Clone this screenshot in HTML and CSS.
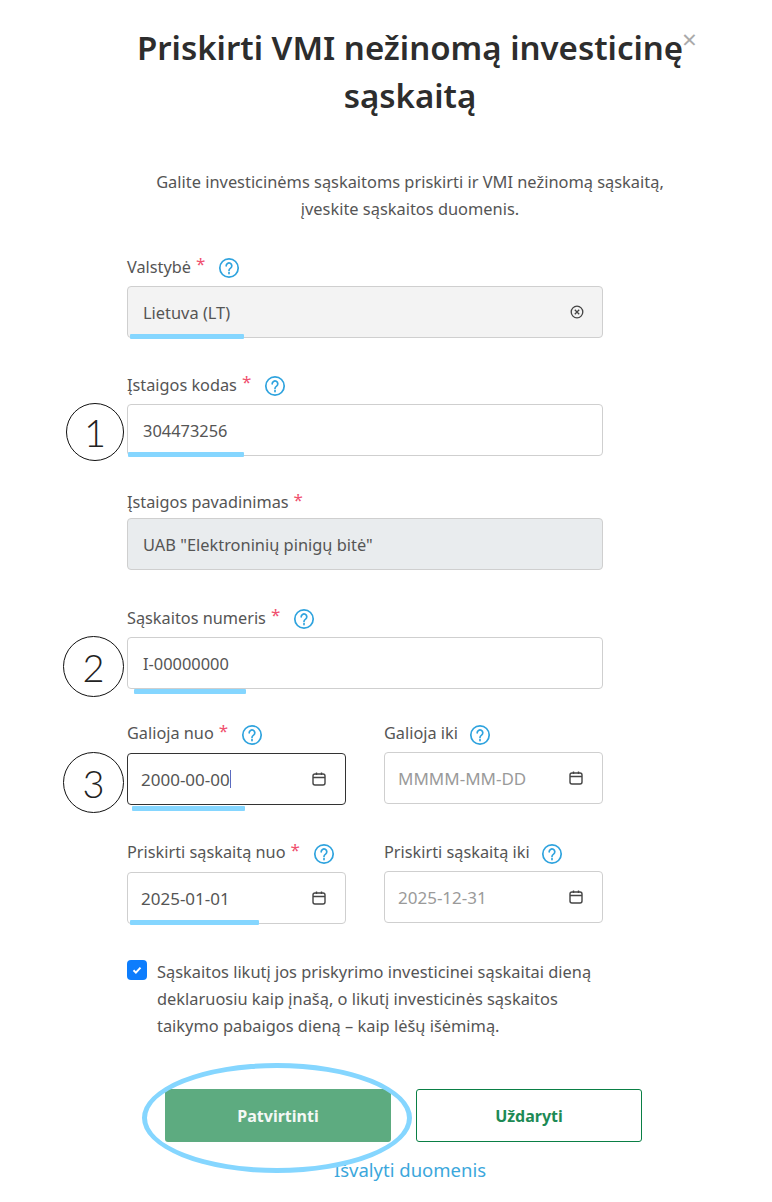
FILE: index.html
```html
<!DOCTYPE html>
<html lang="lt">
<head>
    <meta charset="UTF-8">
    <meta name="viewport" content="width=device-width, initial-scale=1.0">
    <title>Priskirti VMI nežinomą investicinę sąskaitą</title>
    <link rel="stylesheet" href="styles.css">
</head>
<body>
    <div class="modal">
        <span class="close-button">&times;</span>
        <h1 class="modal-title">Priskirti VMI nežinomą investicinę sąskaitą</h1>
        <p class="modal-intro">Galite investicinėms sąskaitoms priskirti ir VMI nežinomą sąskaitą,<br>įveskite sąskaitos duomenis.</p>

        <form class="form">
            <div class="field">
                <div class="field-label">Valstybė <span class="required">*</span>
                    <svg class="help-icon" viewBox="0 0 22 22"><circle cx="11" cy="11" r="9.2"/><path d="M8.2 8.8a2.8 2.8 0 1 1 4.4 2.3c-1 .7-1.6 1.2-1.6 2.3"/><path d="M11 15.6v1"/></svg>
                </div>
                <div class="input-box input-grey">
                    <span>Lietuva (LT)</span>
                    <svg class="clear-icon" viewBox="0 0 14 14"><circle cx="7" cy="7" r="5.8"/><path d="M4.8 4.8l4.4 4.4M9.2 4.8l-4.4 4.4"/></svg>
                    <i class="mark mark-country"></i>
                </div>
            </div>

            <div class="field">
                <div class="field-label">Įstaigos kodas <span class="required">*</span>
                    <svg class="help-icon" viewBox="0 0 22 22"><circle cx="11" cy="11" r="9.2"/><path d="M8.2 8.8a2.8 2.8 0 1 1 4.4 2.3c-1 .7-1.6 1.2-1.6 2.3"/><path d="M11 15.6v1"/></svg>
                </div>
                <div class="input-box">
                    <span>304473256</span>
                    <span class="step-circle step-one">1</span>
                    <i class="mark mark-code"></i>
                </div>
            </div>

            <div class="field field-plain">
                <div class="field-label">Įstaigos pavadinimas <span class="required">*</span></div>
                <div class="input-box input-disabled">
                    <span>UAB "Elektroninių pinigų bitė"</span>
                </div>
            </div>

            <div class="field field-short">
                <div class="field-label">Sąskaitos numeris <span class="required">*</span>
                    <svg class="help-icon" viewBox="0 0 22 22"><circle cx="11" cy="11" r="9.2"/><path d="M8.2 8.8a2.8 2.8 0 1 1 4.4 2.3c-1 .7-1.6 1.2-1.6 2.3"/><path d="M11 15.6v1"/></svg>
                </div>
                <div class="input-box">
                    <span>I-00000000</span>
                    <span class="step-circle step-two">2</span>
                    <i class="mark mark-number"></i>
                </div>
            </div>

            <div class="field-row">
                <div class="field">
                    <div class="field-label">Galioja nuo <span class="required">*</span>
                        <svg class="help-icon" viewBox="0 0 22 22"><circle cx="11" cy="11" r="9.2"/><path d="M8.2 8.8a2.8 2.8 0 1 1 4.4 2.3c-1 .7-1.6 1.2-1.6 2.3"/><path d="M11 15.6v1"/></svg>
                    </div>
                    <div class="input-box input-focus">
                        <span class="date-value">2000-00-00</span><i class="caret"></i>
                        <svg class="date-icon" viewBox="0 0 16 16"><rect x="2" y="3" width="12" height="11" rx="2"/><path d="M2 6.5h12M5.5 1.5v2.5M10.5 1.5v2.5"/></svg>
                        <span class="step-circle step-three">3</span>
                        <i class="mark mark-from"></i>
                    </div>
                </div>
                <div class="field">
                    <div class="field-label">Galioja iki
                        <svg class="help-icon" viewBox="0 0 22 22"><circle cx="11" cy="11" r="9.2"/><path d="M8.2 8.8a2.8 2.8 0 1 1 4.4 2.3c-1 .7-1.6 1.2-1.6 2.3"/><path d="M11 15.6v1"/></svg>
                    </div>
                    <div class="input-box">
                        <span class="placeholder">MMMM-MM-DD</span>
                        <svg class="date-icon" viewBox="0 0 16 16"><rect x="2" y="3" width="12" height="11" rx="2"/><path d="M2 6.5h12M5.5 1.5v2.5M10.5 1.5v2.5"/></svg>
                    </div>
                </div>
            </div>

            <div class="field-row">
                <div class="field">
                    <div class="field-label">Priskirti sąskaitą nuo <span class="required">*</span>
                        <svg class="help-icon" viewBox="0 0 22 22"><circle cx="11" cy="11" r="9.2"/><path d="M8.2 8.8a2.8 2.8 0 1 1 4.4 2.3c-1 .7-1.6 1.2-1.6 2.3"/><path d="M11 15.6v1"/></svg>
                    </div>
                    <div class="input-box">
                        <span class="date-value">2025-01-01</span>
                        <svg class="date-icon" viewBox="0 0 16 16"><rect x="2" y="3" width="12" height="11" rx="2"/><path d="M2 6.5h12M5.5 1.5v2.5M10.5 1.5v2.5"/></svg>
                        <i class="mark mark-assign"></i>
                    </div>
                </div>
                <div class="field">
                    <div class="field-label">Priskirti sąskaitą iki
                        <svg class="help-icon" viewBox="0 0 22 22"><circle cx="11" cy="11" r="9.2"/><path d="M8.2 8.8a2.8 2.8 0 1 1 4.4 2.3c-1 .7-1.6 1.2-1.6 2.3"/><path d="M11 15.6v1"/></svg>
                    </div>
                    <div class="input-box">
                        <span class="placeholder">2025-12-31</span>
                        <svg class="date-icon" viewBox="0 0 16 16"><rect x="2" y="3" width="12" height="11" rx="2"/><path d="M2 6.5h12M5.5 1.5v2.5M10.5 1.5v2.5"/></svg>
                    </div>
                </div>
            </div>

            <div class="check-row">
                <span class="check-box">
                    <svg viewBox="0 0 12 12"><path d="M2.5 6.3l2.4 2.3 4.6-5"/></svg>
                </span>
                <p>Sąskaitos likutį jos priskyrimo investicinei sąskaitai dieną deklaruosiu kaip įnašą, o likutį investicinės sąskaitos taikymo pabaigos dieną – kaip lėšų išėmimą.</p>
            </div>
        </form>

        <div class="button-row">
            <div class="button-wrap">
                <button class="button button-primary" type="button">Patvirtinti</button>
                <span class="button-ring"></span>
            </div>
            <button class="button button-outline" type="button">Uždaryti</button>
        </div>
        <a class="clear-link" href="#">Išvalyti duomenis</a>
    </div>
</body>
</html>
```

FILE: styles.css
```css
body {
    font-family: "Noto Sans", Arial, sans-serif;
    background-color: white;
    color: #555;
    margin: 0;
    padding: 0;
}
.modal {
    position: relative;
    width: 772px;
    height: 1202px;
    overflow: hidden;
    box-sizing: border-box;
    padding-top: 24px;
}
.close-button {
    position: absolute;
    left: 682px;
    top: 24px;
    font-size: 26px;
    line-height: 30px;
    color: #aaa;
}
.modal-title {
    width: 600px;
    margin: 0 0 0 110px;
    font-size: 33px;
    line-height: 48px;
    font-weight: 600;
    color: #2d2d2d;
    text-align: center;
}
.modal-intro {
    margin: 48px 0 0 48px;
    font-size: 16.4px;
    line-height: 27px;
    color: #555;
    text-align: center;
}
.form {
    width: 476px;
    margin: 36px 0 0 127px;
}
.field {
    margin-bottom: 38px;
}
.field-plain {
    margin-bottom: 39px;
}
.field-short {
    margin-bottom: 35px;
}
.field-row {
    display: flex;
    gap: 38px;
}
.field-row .field {
    width: 219px;
    margin-bottom: 39px;
}
.field-row .field:first-child {
    margin-bottom: 38px;
}
.field-label {
    display: flex;
    align-items: center;
    gap: 5px;
    height: 17px;
    margin-bottom: 11px;
    font-size: 16.3px;
    color: #555;
}
.field-plain .field-label {
    height: 16px;
    margin-bottom: 8px;
}
.field-row .field-label {
    height: 18px;
    margin-bottom: 10px;
}
.field-row .field:first-child .field-label {
    margin-bottom: 11px;
}
.required {
    color: #f0506e;
    font-size: 17px;
    margin-top: -6px;
}
.help-icon {
    flex: none;
    width: 22px;
    height: 22px;
    margin-left: 6px;
    margin-top: 3px;
    fill: none;
    stroke: #2fa3de;
    stroke-width: 1.7;
    stroke-linecap: round;
}
.required + .help-icon {
    margin-left: 8px;
}
.input-box {
    position: relative;
    display: flex;
    align-items: center;
    justify-content: space-between;
    height: 52px;
    box-sizing: border-box;
    padding: 0 18px 0 15px;
    border: 1px solid #cfcfcf;
    border-radius: 4px;
    font-size: 16.4px;
    color: #555;
    background-color: white;
}
.field-row .input-box {
    padding-left: 13px;
    font-size: 17px;
}
.input-grey {
    background-color: #f3f3f3;
}
.input-disabled {
    background-color: #e9ecee;
}
.field-row .input-focus {
    border: 1.5px solid #333;
    justify-content: flex-start;
}
.input-focus .date-icon {
    margin-left: auto;
}
.placeholder {
    color: #9a9a9a;
}
.caret {
    width: 1px;
    height: 18px;
    background-color: #5b6bc0;
}
.clear-icon {
    width: 14px;
    height: 14px;
    fill: none;
    stroke: #444;
    stroke-width: 1.3;
}
.date-icon {
    width: 16px;
    height: 16px;
    fill: none;
    stroke: #444;
    stroke-width: 1.4;
}
.mark {
    position: absolute;
    height: 5px;
    bottom: -2px;
    background-color: #85d6ff;
    border-radius: 1px;
}
.mark-country {
    left: 2px;
    width: 114px;
}
.mark-code {
    left: 0;
    width: 116px;
}
.mark-number {
    left: 6px;
    width: 112px;
    bottom: -6px;
}
.mark-from {
    left: 4px;
    width: 113px;
    bottom: -7px;
}
.mark-assign {
    left: 2px;
    width: 129px;
}
.step-circle {
    position: absolute;
    width: 58px;
    height: 58px;
    box-sizing: border-box;
    border: 1.5px solid #111;
    border-radius: 50%;
    background-color: white;
    display: flex;
    align-items: center;
    justify-content: center;
    font-family: "Lato", sans-serif;
    font-weight: 300;
    font-size: 38px;
    color: #222;
}
.step-one {
    left: -62px;
    top: -2px;
}
.step-two,
.step-three {
    left: -65px;
    top: -2px;
    width: 61px;
    height: 61px;
}
.check-row {
    display: flex;
    gap: 10px;
    width: 490px;
    margin-top: -4px;
}
.check-box {
    display: flex;
    align-items: center;
    justify-content: center;
    flex: none;
    width: 20px;
    height: 20px;
    margin-top: 2px;
    border-radius: 4px;
    background-color: #0d7dfd;
}
.check-box svg {
    width: 12px;
    height: 12px;
    fill: none;
    stroke: white;
    stroke-width: 2;
}
.check-row p {
    margin: 0;
    font-size: 16.4px;
    line-height: 27px;
    color: #555;
}
.button-row {
    display: flex;
    gap: 25px;
    margin: 50px 0 0 165px;
}
.button-wrap {
    position: relative;
    z-index: 1;
}
.button {
    display: block;
    width: 226px;
    height: 53px;
    border-radius: 3px;
    font-family: inherit;
    font-size: 16px;
    font-weight: 700;
    cursor: pointer;
}
.button-primary {
    background-color: #5dab80;
    border: none;
    color: #f4f8f5;
}
.button-outline {
    background-color: white;
    border: 1.5px solid #0a7f45;
    color: #1d8a55;
}
.button-ring {
    position: absolute;
    left: -23px;
    top: -26px;
    width: 270px;
    height: 110px;
    box-sizing: border-box;
    border: 5px solid #85d6ff;
    border-radius: 50%;
}
.clear-link {
    display: block;
    width: 160px;
    margin: 16px 0 0 330px;
    font-size: 18.5px;
    line-height: 24px;
    text-align: center;
    text-decoration: none;
    color: #3ba7dc;
}
```
